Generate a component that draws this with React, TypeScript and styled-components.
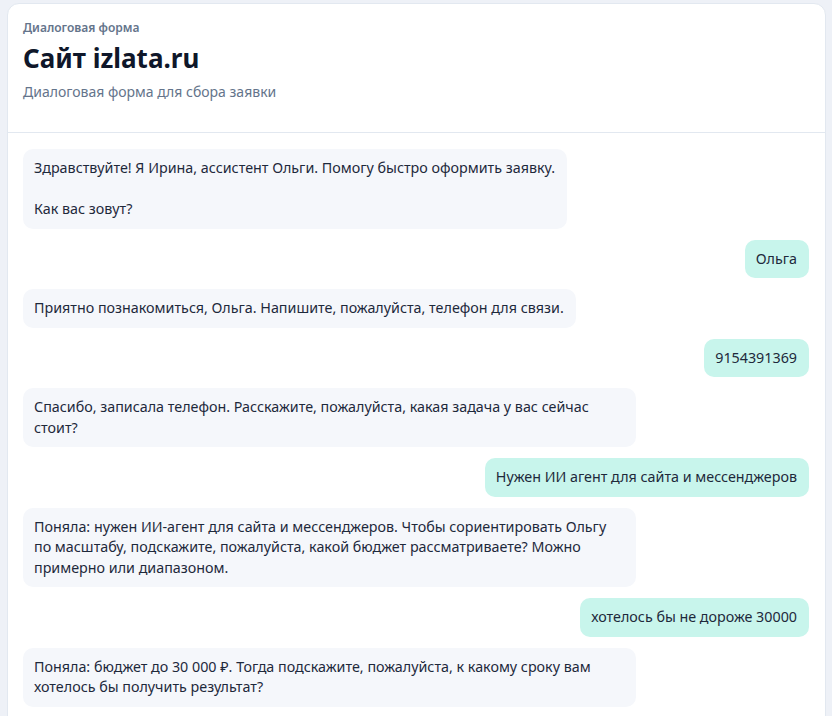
import styled, { createGlobalStyle } from 'styled-components'

const GlobalStyle = createGlobalStyle`
    * { box-sizing: border-box; }
    html, body {
        margin: 0;
        padding: 0;
        background: #eef1f7;
        overflow: hidden;
    }
    body {
        font-family: "Noto Sans", "Open Sans", Arial, sans-serif;
        color: #0f172a;
    }
`

const Page = styled.div`
    padding: 3px 6px 0 7px;
    height: 716px;
`

const Card = styled.section`
    background: #fff;
    border: 1px solid #e2e8f0;
    border-radius: 12px;
    min-height: 760px;
    display: flex;
    flex-direction: column;
`

const Header = styled.header`
    padding: 16px 15px 30px;
    border-bottom: 1px solid #e2e8f0;
`

const Eyebrow = styled.div`
    font-size: 12px;
    line-height: 16px;
    font-weight: 600;
    color: #64748b;
`

const Title = styled.h1`
    margin: 6px 0 0;
    font-size: 26px;
    line-height: 32px;
    font-weight: 700;
    color: #0f172a;
`

const Subtitle = styled.p`
    margin: 8px 0 0;
    font-size: 14px;
    line-height: 20px;
    color: #64748b;
`

const Chat = styled.div`
    display: flex;
    flex-direction: column;
    gap: 11px;
    padding: 16px 16px 16px 15px;
`

const Bubble = styled.div<{ $from: 'bot' | 'user' }>`
    align-self: ${p => (p.$from === 'user' ? 'flex-end' : 'flex-start')};
    max-width: 78%;
    padding: 9px 12px 9px 11px;
    border-radius: 10px;
    background: ${p => (p.$from === 'user' ? '#c8f5ec' : '#f5f7fb')};
    color: #1e293b;
    font-size: 14.3px;
    line-height: 20.5px;
    white-space: pre-wrap;
`

const messages: { from: 'bot' | 'user'; text: string }[] = [
    { from: 'bot', text: 'Здравствуйте! Я Ирина, ассистент Ольги. Помогу быстро оформить заявку.\n\nКак вас зовут?' },
    { from: 'user', text: 'Ольга' },
    { from: 'bot', text: 'Приятно познакомиться, Ольга. Напишите, пожалуйста, телефон для связи.' },
    { from: 'user', text: '9154391369' },
    { from: 'bot', text: 'Спасибо, записала телефон. Расскажите, пожалуйста, какая задача у вас сейчас стоит?' },
    { from: 'user', text: 'Нужен ИИ агент для сайта и мессенджеров' },
    { from: 'bot', text: 'Поняла: нужен ИИ-агент для сайта и мессенджеров. Чтобы сориентировать Ольгу по масштабу, подскажите, пожалуйста, какой бюджет рассматриваете? Можно примерно или диапазоном.' },
    { from: 'user', text: 'хотелось бы не дороже 30000' },
    { from: 'bot', text: 'Поняла: бюджет до 30 000 ₽. Тогда подскажите, пожалуйста, к какому сроку вам хотелось бы получить результат?' },
]

const App = () => {
    return (
        <>
            <GlobalStyle />
            <Page>
                <Card>
                    <Header>
                        <Eyebrow>Диалоговая форма</Eyebrow>
                        <Title>Сайт izlata.ru</Title>
                        <Subtitle>Диалоговая форма для сбора заявки</Subtitle>
                    </Header>
                    <Chat>
                        {messages.map((m, i) => (
                            <Bubble key={i} $from={m.from}>{m.text}</Bubble>
                        ))}
                    </Chat>
                </Card>
            </Page>
        </>
    )
}

export default App
